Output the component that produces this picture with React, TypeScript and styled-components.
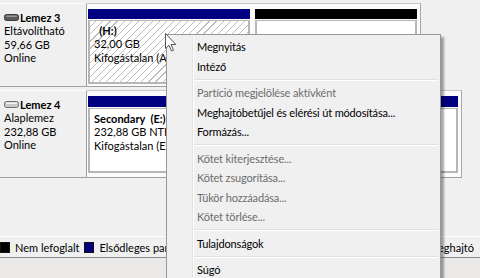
import React from "react";
import styled, { createGlobalStyle } from "styled-components";

const GlobalStyle = createGlobalStyle`
  html, body {
    margin: 0;
    padding: 0;
    background: #f0f0f0;
  }
  body {
    font-family: Lato, "Open Sans", sans-serif;
    font-size: 11px;
    color: #000;
  }
`;

const Screen = styled.div`
  position: relative;
  width: 480px;
  height: 278px;
  overflow: hidden;
  background: #f0f0f0;
  display: flex;
  flex-direction: column;
`;

const DiskList = styled.div`
  flex: 1;
  display: flex;
  flex-direction: column;
  gap: 3px;
  padding-top: 3px;
`;

const DiskRow = styled.div<{ $h: number }>`
  display: flex;
  height: ${(p) => p.$h}px;
`;

const DiskLabel = styled.div`
  width: 87px;
  box-sizing: border-box;
  border-top: 1px solid #fff;
  border-right: 1px solid #a0a0a0;
  border-bottom: 1px solid #a0a0a0;
  padding: 7px 0 0 4px;
  line-height: 13.3px;
  white-space: nowrap;
`;

const DiskTitle = styled.div`
  display: flex;
  align-items: center;
  gap: 1px;
  font-weight: 700;
`;

const PartitionArea = styled.div<{ $w: number; $pb: number }>`
  width: ${(p) => p.$w}px;
  box-sizing: border-box;
  display: flex;
  gap: 5px;
  padding: 5px 3px ${(p) => p.$pb}px 1px;
  background: #fbfbfb;
  border-top: 1px solid #c8c8c8;
  border-right: 1px solid #a8a8a8;
  border-bottom: 1px solid #a0a0a0;
`;

const Partition = styled.div<{ $w: number }>`
  width: ${(p) => p.$w}px;
  display: flex;
  flex-direction: column;
`;

const PartitionHeader = styled.div<{ $color: string; $h: number }>`
  height: ${(p) => p.$h}px;
  background: ${(p) => p.$color};
`;

const PartitionBody = styled.div<{ $hatched?: boolean }>`
  flex: 1;
  margin-top: 1px;
  box-sizing: border-box;
  border: 2px solid #b6b6b6;
  border-top-width: 1px;
  padding: 3px 0 0 4px;
  line-height: 13.3px;
  white-space: pre;
  overflow: hidden;
  background: ${(p) =>
    p.$hatched
      ? "repeating-linear-gradient(-45deg, #bdbdbd 0 0.8px, #fff 0.8px 5px)"
      : "#fff"};
`;

const Bold = styled.div`
  font-weight: 700;
`;

const Legend = styled.div`
  height: 22px;
  box-sizing: border-box;
  display: flex;
  align-items: center;
  gap: 5px;
  border-top: 1px solid #fff;
  border-bottom: 1px solid #8c8c8c;
  white-space: nowrap;
  padding-right: 6px;
`;

const LegendItem = styled.div<{ $push?: boolean }>`
  display: flex;
  align-items: center;
  gap: 5px;
  margin-left: ${(p) => (p.$push ? "auto" : "0")};
`;

const Swatch = styled.span<{ $color: string }>`
  width: 8px;
  height: 9px;
  background: ${(p) => p.$color};
  border: 1px solid #111;
`;

const StatusBar = styled.div`
  height: 20px;
  background: #ebe9e8;
`;

const Menu = styled.div`
  position: absolute;
  left: 166px;
  top: 34px;
  width: 275px;
  height: 260px;
  box-sizing: border-box;
  padding: 2px;
  background: #f0f0f0;
  border: 1px solid #979797;
  box-shadow: 3px 3px 2px rgba(0, 0, 0, 0.35);

  &::before {
    content: "";
    position: absolute;
    left: 25px;
    top: 2px;
    bottom: 0;
    width: 1px;
    background: #e2e3e3;
    border-right: 1px solid #fff;
  }
`;

const MenuItem = styled.div<{ $disabled?: boolean }>`
  height: 19.5px;
  line-height: 19.5px;
  padding-left: 28px;
  white-space: nowrap;
  letter-spacing: -0.15px;
  color: ${(p) => (p.$disabled ? "#6d6d6d" : "#000")};
`;

const MenuSeparator = styled.div`
  height: 7px;
  margin-left: 24px;
  display: flex;
  flex-direction: column;
  justify-content: center;

  &::before {
    content: "";
    height: 1px;
    background: #e0e0e0;
    border-bottom: 1px solid #fff;
  }
`;

const Cursor = styled.svg`
  position: absolute;
  left: 165px;
  top: 33px;
`;

const DiskIcon = ({ light }: { light?: boolean }) => (
  <svg width="15" height="7" viewBox="0 0 15 7">
    <rect
      x="0.5"
      y="0.5"
      width="14"
      height="6"
      rx="2"
      fill={light ? "#c9c9c9" : "#5a5a5a"}
      stroke={light ? "#6e6e6e" : "#3a3a3a"}
    />
    <rect x="2" y="1.5" width="11" height="1.5" rx="0.7" fill={light ? "#f2f2f2" : "#9a9a9a"} />
  </svg>
);

const menuItems: (string | { text: string; disabled?: boolean } | null)[] = [
  "Megnyitás",
  "Intéző",
  null,
  { text: "Partíció megjelölése aktívként", disabled: true },
  "Meghajtóbetűjel és elérési út módosítása...",
  "Formázás...",
  null,
  { text: "Kötet kiterjesztése...", disabled: true },
  { text: "Kötet zsugorítása...", disabled: true },
  { text: "Tükör hozzáadása...", disabled: true },
  { text: "Kötet törlése...", disabled: true },
  null,
  "Tulajdonságok",
  null,
  "Súgó",
];

export default function App() {
  return (
    <>
      <GlobalStyle />
      <Screen>
        <DiskList>
          <DiskRow $h={84}>
            <DiskLabel>
              <DiskTitle>
                <DiskIcon />
                Lemez 3
              </DiskTitle>
              <div>Eltávolítható</div>
              <div>59,66 GB</div>
              <div>Online</div>
            </DiskLabel>
            <PartitionArea $w={334} $pb={2}>
              <Partition $w={162}>
                <PartitionHeader $color="#000080" $h={10} />
                <PartitionBody $hatched>
                  <Bold>{"  (H:)"}</Bold>
                  <div>32,00 GB</div>
                  <div>Kifogástalan (Aktív, Elsődleges partíció)</div>
                </PartitionBody>
              </Partition>
              <Partition $w={162}>
                <PartitionHeader $color="#000" $h={10} />
                <PartitionBody />
              </Partition>
            </PartitionArea>
          </DiskRow>
          <DiskRow $h={88}>
            <DiskLabel>
              <DiskTitle>
                <DiskIcon light />
                Lemez 4
              </DiskTitle>
              <div>Alaplemez</div>
              <div>232,88 GB</div>
              <div>Online</div>
            </DiskLabel>
            <PartitionArea $w={375} $pb={4}>
              <Partition $w={370}>
                <PartitionHeader $color="#000080" $h={11} />
                <PartitionBody>
                  <Bold>{"Secondary  (E:)"}</Bold>
                  <div>232,88 GB NTFS</div>
                  <div>Kifogástalan (Elsődleges partíció)</div>
                </PartitionBody>
              </Partition>
            </PartitionArea>
          </DiskRow>
        </DiskList>
        <Legend>
          <LegendItem>
            <Swatch $color="#000" />
            Nem lefoglalt
          </LegendItem>
          <LegendItem>
            <Swatch $color="#000080" />
            Elsődleges partíció
          </LegendItem>
          <LegendItem $push>
            <Swatch $color="#0000ff" />
            Logikai meghajtó
          </LegendItem>
        </Legend>
        <StatusBar />
        <Menu>
          {menuItems.map((item, i) =>
            item === null ? (
              <MenuSeparator key={i} />
            ) : typeof item === "string" ? (
              <MenuItem key={i}>{item}</MenuItem>
            ) : (
              <MenuItem key={i} $disabled={item.disabled}>
                {item.text}
              </MenuItem>
            )
          )}
        </Menu>
        <Cursor width="12" height="19" viewBox="0 0 12 19">
          <path
            d="M0.5 0.5 L0.5 15.5 L4 12.2 L6.5 18 L8.5 17.2 L6 11.5 L10.8 11.5 Z"
            fill="#fff"
            stroke="#555"
            strokeWidth="1"
            strokeLinejoin="round"
          />
        </Cursor>
      </Screen>
    </>
  );
}
